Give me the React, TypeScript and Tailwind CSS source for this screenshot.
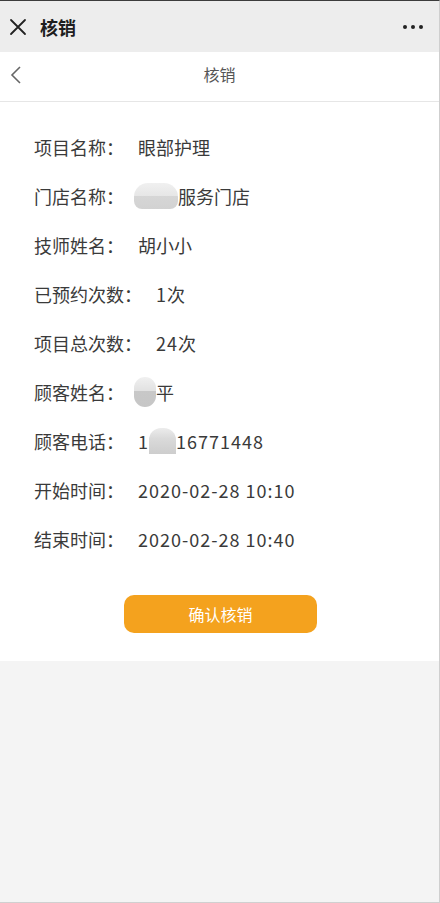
import React from "react";

const font = { fontFamily: '"Noto Sans CJK SC", "Noto Sans", sans-serif' };

const rows: { label: string; value: React.ReactNode }[] = [
  { label: "项目名称：", value: "眼部护理" },
  {
    label: "门店名称：",
    value: (
      <span className="flex items-center">
        <span className="inline-block w-[44px] h-[26px] -ml-[4px] rounded-t-[14px] rounded-b-[8px] bg-[linear-gradient(180deg,#f0f0f0_0%,#e6e6e6_50%,#d6d6d6_50%,#d2d2d2_100%)]" />
        <span>服务门店</span>
      </span>
    ),
  },
  { label: "技师姓名：", value: "胡小小" },
  { label: "已预约次数：", value: <span className="tracking-[1px]">1次</span> },
  { label: "项目总次数：", value: <span className="tracking-[1px]">24次</span> },
  {
    label: "顾客姓名：",
    value: (
      <span className="flex items-center">
        <span className="inline-block w-[22px] h-[30px] -ml-[4px] rounded-full bg-[linear-gradient(180deg,#f0f0f0_0%,#e2e2e2_45%,#c8c8c8_45%,#c6c6c6_100%)]" />
        <span>平</span>
      </span>
    ),
  },
  {
    label: "顾客电话：",
    value: (
      <span className="flex items-center tracking-[1px]">
        <span>1</span>
        <span className="inline-block w-[27px] h-[26px] rounded-t-[12px] bg-[linear-gradient(180deg,#ececec_0%,#dadada_40%,#cdcdcd_100%)]" />
        <span>16771448</span>
      </span>
    ),
  },
  { label: "开始时间：", value: <span className="tracking-[1px]">2020-02-28 10:10</span> },
  { label: "结束时间：", value: <span className="tracking-[1px]">2020-02-28 10:40</span> },
];

export default function App() {
  return (
    <div className="w-[440px] h-[903px] flex flex-col bg-[#f4f4f4] border-t border-[#3c3c3c] border-r border-r-[#cfcfcf] border-b border-b-[#d0d0d0] overflow-hidden" style={font}>
      {/* top window bar */}
      <div className="h-[51px] shrink-0 bg-[#ededed] flex items-center pl-[9px] pr-[16px]">
        <svg width="18" height="18" viewBox="0 0 18 18" className="shrink-0">
          <path d="M2 2 L16 16 M16 2 L2 16" stroke="#222" strokeWidth="1.8" strokeLinecap="round" />
        </svg>
        <span className="ml-[13px] text-[18px] font-bold text-[#1e1e1e] leading-none">核销</span>
        <div className="ml-auto flex items-center gap-[4px]">
          <span className="w-[4px] h-[4px] rounded-full bg-[#222]" />
          <span className="w-[4px] h-[4px] rounded-full bg-[#222]" />
          <span className="w-[4px] h-[4px] rounded-full bg-[#222]" />
        </div>
      </div>
      {/* nav bar */}
      <div className="h-[50px] shrink-0 bg-white border-b border-[#e6e6e6] relative flex items-center justify-center pb-[5px]">
        <svg width="12" height="18" viewBox="0 0 12 18" className="absolute left-[10px] top-[14px]">
          <path d="M10 1 L2 9 L10 17" fill="none" stroke="#666" strokeWidth="1.6" />
        </svg>
        <span className="text-[16px] text-[#555] leading-none">核销</span>
      </div>
      {/* content */}
      <div className="bg-white pt-[20px] pb-[28px]">
        {rows.map((r, i) => (
          <div key={i} className="h-[49px] flex items-center pl-[34px] text-[18px] text-[#3a3a3a] leading-none">
            <span>{r.label}</span>
            <span className="ml-[14px] flex items-center">{r.value}</span>
          </div>
        ))}
        <div className="flex justify-center mt-[32px] pl-[2px]">
          <button className="w-[193px] h-[38px] rounded-[10px] bg-[#f4a21e] text-white text-[16px] leading-none flex items-center justify-center">
            确认核销
          </button>
        </div>
      </div>
      <div className="flex-1" />
    </div>
  );
}
